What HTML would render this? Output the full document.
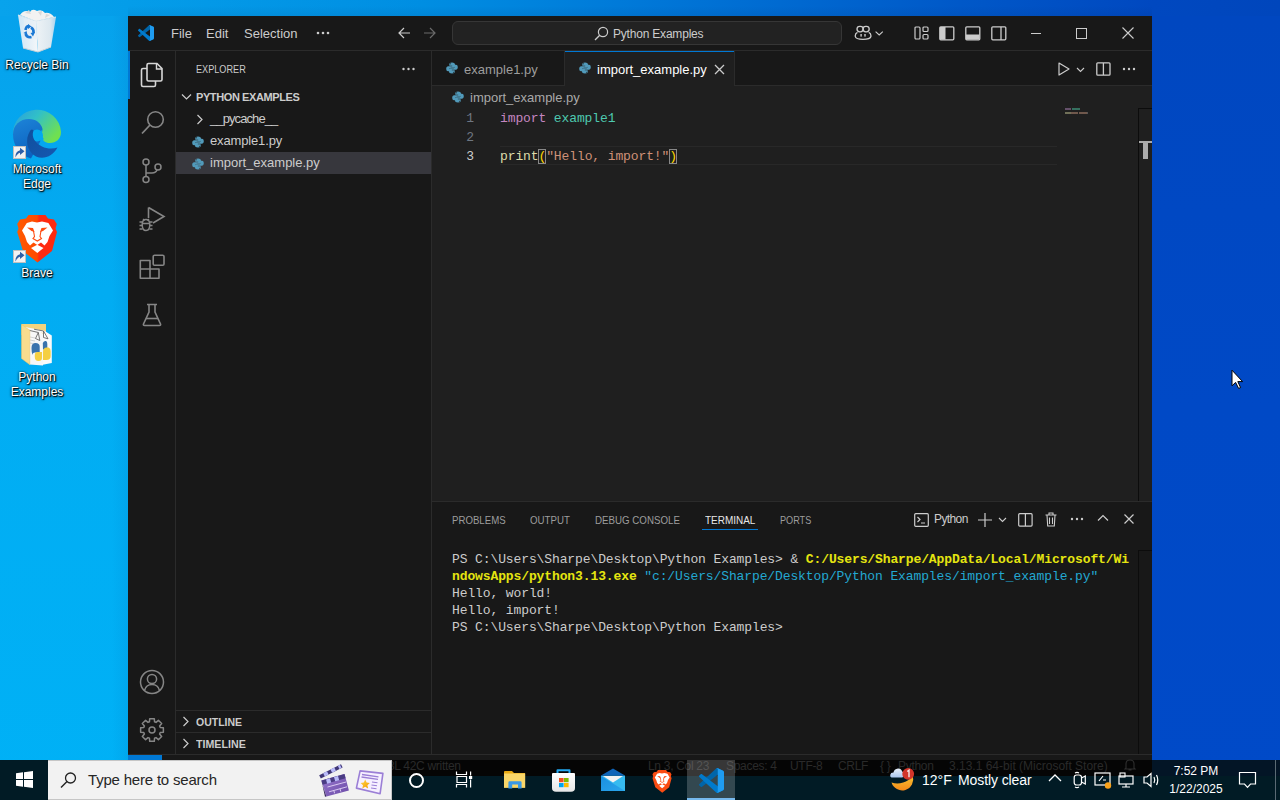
<!DOCTYPE html>
<html><head><meta charset="utf-8">
<style>
*{margin:0;padding:0;box-sizing:border-box}
html,body{width:1280px;height:800px;overflow:hidden;font-family:"Liberation Sans",sans-serif}
body{position:relative;background:#0050c6}
.a{position:absolute}
.t{position:absolute;white-space:nowrap}
svg{position:absolute;overflow:visible}
.mono{font-family:"Liberation Mono",monospace}
.desk{font-size:12px;color:#fff;line-height:15px;text-shadow:1px 1px 1px #000,0 0 2px rgba(0,0,0,0.9),0 1px 3px rgba(0,0,0,0.6)}
</style></head><body>
<svg width="0" height="0" style="position:absolute">
<defs>
<g id="py">
<path d="M6 0.5C3.5 0.5 3.3 1.5 3.3 2.5V3.8H6.2V4.3H2.2C1 4.3 0.2 5.2 0.2 6.8C0.2 8.5 1 9.3 2 9.3H3.2V7.6C3.2 6.6 4 5.8 5 5.8H7.6C8.4 5.8 9 5.2 9 4.4V2.5C9 1.5 8.2 0.5 6 0.5Z M4.6 1.3A0.5 0.5 0 1 1 4.6 2.3A0.5 0.5 0 1 1 4.6 1.3Z" fill="#519aba" fill-rule="evenodd"/>
<path d="M6 11.5C8.5 11.5 8.7 10.5 8.7 9.5V8.2H5.8V7.7H9.8C11 7.7 11.8 6.8 11.8 5.2C11.8 3.5 11 2.7 10 2.7H8.8V4.4C8.8 5.4 8 6.2 7 6.2H4.4C3.6 6.2 3 6.8 3 7.6V9.5C3 10.5 3.8 11.5 6 11.5Z M7.4 9.7A0.5 0.5 0 1 1 7.4 10.7A0.5 0.5 0 1 1 7.4 9.7Z" fill="#519aba" fill-rule="evenodd"/>
</g>
</defs></svg>
<!-- desktop gradient -->
<div class="a" style="left:0;top:0;width:1280px;height:800px;background:#0049c6"></div>
<div class="a" style="left:0;top:0;width:1280px;height:16px;background:linear-gradient(90deg,#08a3ec 0%,#049de9 10%,#008ee2 33%,#0078d8 50%,#0058c8 75%,#0048c0 90%,#0046bc 100%)"></div>
<div class="a" style="left:0;top:16px;width:128px;height:784px;background:linear-gradient(180deg,#06a2ec 0%,#02acf2 35%,#00b1f6 100%)"></div>
<div class="a" style="left:112px;top:16px;width:16px;height:784px;background:linear-gradient(90deg,rgba(0,60,140,0) 0%,rgba(0,60,140,0.08) 100%)"></div>
<div class="a" style="left:128px;top:6px;width:1024px;height:10px;background:linear-gradient(180deg,rgba(0,20,60,0) 0%,rgba(0,20,60,0.07) 100%)"></div>
<div class="a" style="left:1152px;top:16px;width:128px;height:784px;background:linear-gradient(180deg,#0047c0 0%,#0049c6 50%,#004ac8 100%)"></div>
<!-- desktop icons -->
<svg style="left:0;top:0" width="74" height="60" viewBox="0 0 74 60">
<defs><linearGradient id="rbL" x1="0" y1="0" x2="1" y2="0"><stop offset="0" stop-color="#cfe6f6"/><stop offset="1" stop-color="#f4f7f9"/></linearGradient>
<linearGradient id="rbR" x1="0" y1="0" x2="1" y2="0"><stop offset="0" stop-color="#eef3f6"/><stop offset="0.7" stop-color="#dde8ef"/><stop offset="1" stop-color="#a9d3ef"/></linearGradient></defs>
<path d="M18 15L36 21L38 52L23 48Z" fill="url(#rbL)"/>
<path d="M36 21L56 17L51 47L38 52Z" fill="url(#rbR)"/>
<path d="M18 15L36 21L56 17" fill="none" stroke="#d6e4ee" stroke-width="1.2"/>
<path d="M20 15Q24 9 30 12Q32 8 37 11Q42 9 45 13Q50 12 54 17L36 21Z" fill="#f2f2f2"/>
<path d="M25 13L29 10L31 14Z M38 12L42 11L41 16Z M46 14L50 15L45 18Z" fill="#d9d9d9"/>
<path d="M24 36L39 40L37 22L24 19Z" fill="#e6eff5" opacity="0.6"/>
<g fill="none" stroke="#1a78d4" stroke-width="2.6">
<path d="M25.5 30Q26 26 29 26"/><path d="M31 27.5Q34 29 33.5 33"/><path d="M31.5 37Q27 38 25.5 34"/>
</g>
<path d="M28 24L31.5 26.5L28 29Z M35 32L33 36.5L30.5 33Z M23.5 33L26.5 31L27.5 35Z" fill="#1a78d4"/>
<path d="M23 48L38 52L51 47" fill="none" stroke="#c8d2d8" stroke-width="1"/>
</svg>
<div class="t desk" style="left:0;top:58px;width:74px;text-align:center">Recycle Bin</div>
<svg style="left:0;top:100px" width="74" height="62" viewBox="0 100 74 62">
<defs><linearGradient id="eg1" x1="0" y1="0" x2="1" y2="0.6"><stop offset="0" stop-color="#2a9be0"/><stop offset="0.45" stop-color="#31c0c8"/><stop offset="1" stop-color="#70e050"/></linearGradient>
<linearGradient id="eg2" x1="0" y1="0" x2="0.3" y2="1"><stop offset="0" stop-color="#1d84d8"/><stop offset="1" stop-color="#0c62c0"/></linearGradient>
<linearGradient id="eg3" x1="0" y1="0" x2="1" y2="1"><stop offset="0" stop-color="#0f4f9e"/><stop offset="1" stop-color="#1658b0"/></linearGradient></defs>
<path d="M13 134.5A24 23.5 0 0 1 61 132C61 139 56 143 50 143C46 143 43 141 42 138Z" fill="url(#eg1)"/>
<path d="M13 134.5C13 125 20 119 29 119C36 119 41 123 42.5 129L41 140L31 158.5C20 155 13 146 13 134.5Z" fill="url(#eg2)"/>
<circle cx="37" cy="135.5" r="6" fill="#03a8ef"/>
<path d="M42.5 129C41 133 42 137 44 139L41 141L36 138Z" fill="#03a8ef"/>
<path d="M30 131C25 139 26 151 36 156.5C44 160 53 156 57.5 147.5C53 149 47 149 42 146.5C35 143 31 137 33.5 130.5C32 129 31 129.5 30 131Z" fill="url(#eg3)"/>
</svg>
<div class="a" style="left:13px;top:146px;width:13px;height:13px;background:#f2f2f2;border:1px solid #c0c0c0"></div>
<svg style="left:14px;top:147px" width="11" height="11" viewBox="0 0 11 11"><path d="M1.5 10.5Q1 4.5 6 3.2V0.8L10.5 4.3L6 8V5.8Q3.5 6.3 1.5 10.5Z" fill="#2d5fa8"/></svg>
<div class="t desk" style="left:0;top:162px;width:74px;text-align:center;line-height:15px">Microsoft<br>Edge</div>
<svg style="left:0;top:205px" width="74" height="62" viewBox="0 205 74 62">
<defs><linearGradient id="bg1" x1="0" y1="0" x2="1" y2="0"><stop offset="0" stop-color="#ff5a00"/><stop offset="0.5" stop-color="#ff4a00"/><stop offset="0.55" stop-color="#ff2a10"/><stop offset="1" stop-color="#ff2a10"/></linearGradient></defs>
<path d="M28.5 215H45.5L48 218.5L54 219.5L56.8 224L55.5 228.5L57 232L52 251L37.5 262.6L23 251L17.2 232L18.5 228.5L17.2 224L20 219.5L26 218.5Z" fill="url(#bg1)"/>
<path d="M22 230.5L26.8 223L32 221.5L37 222.5L42 221.5L48.4 223L53 230.5L49.5 236L47.5 242L44.5 245.5L41 242.5L37.3 245L33.5 242.5L30 245.5L27 242L25 236Z" fill="#ffffff"/>
<path d="M27 227.5L33 228L34.5 232L31.5 231Z M47.5 227.5L41.5 228L40 232L43 231Z" fill="#ff4a10"/>
<path d="M33.5 231L34.5 236.5L33 238.5L37.3 241L41.5 238.5L40 236.5L41 231" fill="none" stroke="#ff4a10" stroke-width="1.1"/>
<path d="M31 248L37.3 244.8L43.5 248L37.3 253Z" fill="#ffffff"/>
</svg>
<div class="a" style="left:13px;top:250px;width:13px;height:13px;background:#f2f2f2;border:1px solid #c0c0c0"></div>
<svg style="left:14px;top:251px" width="11" height="11" viewBox="0 0 11 11"><path d="M1.5 10.5Q1 4.5 6 3.2V0.8L10.5 4.3L6 8V5.8Q3.5 6.3 1.5 10.5Z" fill="#2d5fa8"/></svg>
<div class="t desk" style="left:0;top:266px;width:74px;text-align:center">Brave</div>
<svg style="left:0;top:315px" width="74" height="55" viewBox="0 315 74 55">
<path d="M21.5 324H46V335L21.5 335Z" fill="#f3d37e"/>
<path d="M25 327L38.5 329.5L43 334V365.5L29.5 364.5Z" fill="#f7f7f7"/>
<path d="M33.5 329L44 330.5L51.8 335.5V363L42.8 364.8V333Z" fill="#fafafa"/>
<path d="M29 330.3L38.3 332.5L39.8 340.5M38.3 332.5L35.5 338.5L39.8 340.5" fill="none" stroke="#555" stroke-width="0.8"/>
<path d="M34 329.2L43.5 331L48 338.8M43.5 331L43.5 337.5L48 338.8" fill="none" stroke="#555" stroke-width="0.8"/>
<path d="M31.5 348Q31.5 343 35.5 343Q39.7 343 39.7 346.5V352.5H35Q32.5 352.5 32.5 355Q31.5 353 31.5 348Z" fill="#3a73ad"/>
<path d="M34.8 355Q34.8 352 37.5 352H42V358Q42 361 38.5 361Q34.8 361 34.8 357Z" fill="#f5cf42"/>
<path d="M42.8 343Q44 340.5 46 341Q47.3 341.5 47.3 344V349.4H43Z" fill="#3a73ad"/>
<path d="M43 352Q43 348 46 347.5H48.5Q50.7 348 50.7 351V356Q50.7 360 46.5 360H43Z" fill="#f5cf42"/>
<path d="M30 337L35 338M30 340L35 341M30 343L33 343.6" stroke="#b8b8b8" stroke-width="0.6"/>
<path d="M21.5 324.5L29.8 330.3V364.7L21.5 358.5Z" fill="#f8dc8e"/>
<path d="M21.5 324.5L29.8 330.3V364.7L21.5 358.5Z" fill="none" stroke="#e9c268" stroke-width="0.5"/>
</svg>
<div class="t desk" style="left:0;top:370px;width:74px;text-align:center;line-height:15px">Python<br>Examples</div>
<!-- cursor -->
<svg style="left:1231px;top:369px" width="14" height="21" viewBox="0 0 14 21"><path d="M1 1.2V16.8L4.6 13.4L7.6 19.4L9.6 18.6L6.8 12.6H11.6Z" fill="#ffffff" stroke="#000" stroke-width="1"/></svg>
<!-- title bar -->
<div class="a" style="left:128px;top:16px;width:1024px;height:761px;background:#181818"></div>
<div class="a" style="left:128px;top:16px;width:1024px;height:34px;background:#181818"></div>
<div class="a" style="left:128px;top:50px;width:1024px;height:1px;background:#2b2b2b"></div>
<!-- vscode logo -->
<svg style="left:138px;top:25px" width="16" height="16" viewBox="0 0 100 100">
<path d="M96.46 10.8L75.86 0.88C73.47 -0.27 70.62 0.21 68.75 2.08L1.3 63.58C-0.52 65.24 -0.51 68.09 1.3 69.75L6.81 74.75C8.3 76.1 10.53 76.2 12.13 74.99L93.36 13.37C96.09 11.3 100 13.25 100 16.67V16.43C100 14.03 98.62 11.84 96.46 10.8Z" fill="#0065a9"/>
<path d="M96.46 89.2L75.86 99.12C73.47 100.27 70.62 99.79 68.75 97.92L1.3 36.42C-0.52 34.76 -0.51 31.91 1.3 30.25L6.81 25.25C8.3 23.9 10.53 23.8 12.13 25.01L93.36 86.63C96.09 88.7 100 86.75 100 83.33V83.57C100 85.97 98.62 88.16 96.46 89.2Z" fill="#007acc"/>
<path d="M75.86 99.13C73.47 100.27 70.62 99.79 68.75 97.92C71.06 100.22 75 98.59 75 95.33V4.67C75 1.41 71.06 -0.22 68.75 2.08C70.62 0.21 73.47 -0.27 75.86 0.87L96.46 10.78C98.62 11.82 100 14.01 100 16.41V83.59C100 85.99 98.62 88.18 96.46 89.22Z" fill="#1f9cf0"/>
</svg>
<div class="t" style="left:171px;top:26px;font-size:13px;color:#cccccc;line-height:16px">File</div>
<div class="t" style="left:206px;top:26px;font-size:13px;color:#cccccc;line-height:16px">Edit</div>
<div class="t" style="left:244px;top:26px;font-size:13px;color:#cccccc;line-height:16px">Selection</div>
<svg style="left:316px;top:31px" width="14" height="4"><circle cx="2" cy="2" r="1.3" fill="#cccccc"/><circle cx="7" cy="2" r="1.3" fill="#cccccc"/><circle cx="12" cy="2" r="1.3" fill="#cccccc"/></svg>
<!-- nav arrows -->
<svg style="left:397px;top:26px" width="14" height="14" viewBox="0 0 14 14"><path d="M13 7H2M7 2L2 7L7 12" stroke="#cccccc" stroke-width="1.2" fill="none"/></svg>
<svg style="left:423px;top:26px" width="14" height="14" viewBox="0 0 14 14"><path d="M1 7H12M7 2L12 7L7 12" stroke="#6b6b6b" stroke-width="1.2" fill="none"/></svg>
<!-- command center -->
<div class="a" style="left:452px;top:21px;width:390px;height:24px;border:1px solid #363636;border-radius:6px;background:#222222"></div>
<svg style="left:594px;top:26px" width="15" height="15" viewBox="0 0 15 15"><circle cx="9" cy="6" r="4.6" stroke="#cccccc" stroke-width="1.2" fill="none"/><path d="M5.7 9.3L1 14" stroke="#cccccc" stroke-width="1.3"/></svg>
<div class="t" style="left:613px;top:27px;font-size:12px;letter-spacing:-0.2px;color:#cccccc;line-height:15px">Python Examples</div>
<!-- copilot -->
<svg style="left:840px;top:16px" width="40" height="34" viewBox="840 16 40 34">
<rect x="857" y="26.3" width="6.2" height="5.6" rx="2.8" fill="none" stroke="#cccccc" stroke-width="1.3"/>
<rect x="863" y="26.3" width="6.2" height="5.6" rx="2.8" fill="none" stroke="#cccccc" stroke-width="1.3"/>
<path d="M857.5 32.3Q855.3 33 855.3 35.5V36.5Q855.8 39.3 863 39.3Q870.3 39.3 870.9 36.5V35.5Q870.9 33 868.7 32.3" fill="none" stroke="#cccccc" stroke-width="1.3"/>
<rect x="860.4" y="34" width="1.4" height="2.6" fill="#cccccc"/>
<rect x="864.3" y="34" width="1.4" height="2.6" fill="#cccccc"/>
</svg>
<svg style="left:875px;top:31px" width="9" height="5" viewBox="0 0 9 5"><path d="M0.6 0.6L4.2 4L7.8 0.6" stroke="#cccccc" stroke-width="1.1" fill="none"/></svg>
<!-- layout icons -->
<svg style="left:914px;top:26px" width="16" height="14" viewBox="0 0 16 14"><rect x="1" y="1" width="5" height="12" rx="1" stroke="#cccccc" stroke-width="1.2" fill="none"/><rect x="9" y="1" width="5" height="4.5" rx="1" stroke="#cccccc" stroke-width="1.2" fill="none"/><rect x="9" y="8.5" width="5" height="4.5" rx="1" stroke="#cccccc" stroke-width="1.2" fill="none"/></svg>
<svg style="left:939px;top:26px" width="16" height="15" viewBox="0 0 16 15"><rect x="0.8" y="0.8" width="14" height="13" rx="1" stroke="#cccccc" stroke-width="1.3" fill="none"/><rect x="1" y="1" width="5.5" height="12.6" fill="#cccccc"/></svg>
<svg style="left:965px;top:26px" width="16" height="15" viewBox="0 0 16 15"><rect x="0.8" y="0.8" width="14" height="13" rx="1" stroke="#cccccc" stroke-width="1.3" fill="none"/><rect x="1" y="8.5" width="13.6" height="5" fill="#cccccc"/></svg>
<svg style="left:991px;top:26px" width="16" height="15" viewBox="0 0 16 15"><rect x="0.8" y="0.8" width="14" height="13" rx="1" stroke="#cccccc" stroke-width="1.3" fill="none"/><path d="M10 1V14" stroke="#cccccc" stroke-width="1.3"/></svg>
<!-- window controls -->
<div class="a" style="left:1031px;top:33px;width:10px;height:1px;background:#cccccc"></div>
<div class="a" style="left:1076px;top:28px;width:11px;height:11px;border:1px solid #cccccc"></div>
<svg style="left:1122px;top:27px" width="12" height="12" viewBox="0 0 12 12"><path d="M0.5 0.5L11.5 11.5M11.5 0.5L0.5 11.5" stroke="#cccccc" stroke-width="1.1"/></svg>
<!-- activity bar -->
<div class="a" style="left:128px;top:51px;width:2px;height:48px;background:#0078d4"></div>
<div class="a" style="left:175px;top:51px;width:1px;height:704px;background:#2b2b2b"></div>
<!-- explorer icon -->
<svg style="left:140px;top:62px" width="24" height="26" viewBox="0 0 24 26">
<path d="M8.5 1.5H17L22 6.5V17.5Q22 19 20.5 19H8.5Q7 19 7 17.5V3Q7 1.5 8.5 1.5Z" fill="none" stroke="#d7d7d7" stroke-width="1.6"/>
<path d="M16.5 1.5V7H22" fill="none" stroke="#d7d7d7" stroke-width="1.4"/>
<path d="M7 6.5H3Q1.5 6.5 1.5 8V23Q1.5 24.5 3 24.5H14Q15.5 24.5 15.5 23V19" fill="none" stroke="#d7d7d7" stroke-width="1.6"/>
</svg>
<!-- search -->
<svg style="left:141px;top:110px" width="24" height="26" viewBox="0 0 24 26">
<circle cx="14.5" cy="9.5" r="7.8" fill="none" stroke="#868686" stroke-width="1.6"/>
<path d="M9 15L1 23.5" stroke="#868686" stroke-width="1.8"/>
</svg>
<!-- source control -->
<svg style="left:141px;top:158px" width="22" height="26" viewBox="0 0 22 26">
<circle cx="5" cy="4" r="3" fill="none" stroke="#868686" stroke-width="1.5"/>
<circle cx="5" cy="21.5" r="3" fill="none" stroke="#868686" stroke-width="1.5"/>
<circle cx="17" cy="9" r="3" fill="none" stroke="#868686" stroke-width="1.5"/>
<path d="M5 7V18.5M5 15H11Q15 15 16 11.8" fill="none" stroke="#868686" stroke-width="1.5"/>
</svg>
<!-- run & debug -->
<svg style="left:139px;top:206px" width="26" height="26" viewBox="0 0 26 26">
<path d="M9.5 1.5V12M9.5 1.5L25 10.5L14 17" fill="none" stroke="#868686" stroke-width="1.6"/>
<path d="M3.2 18.5Q3.2 13.5 7 13.5Q10.8 13.5 10.8 18.5Q10.8 24.5 7 24.5Q3.2 24.5 3.2 18.5Z" fill="none" stroke="#868686" stroke-width="1.5"/>
<path d="M0.5 16H3.2M0.5 19.5H3.2M0.5 23H3.5M10.8 16H13.5M10.8 19.5H13.5M10.5 23H13.5M4 13L5.5 14.5M10 13L8.5 14.5M3.5 17.5H10.5" stroke="#868686" stroke-width="1.3"/>
</svg>
<!-- extensions -->
<svg style="left:139px;top:254px" width="26" height="26" viewBox="0 0 26 26">
<path d="M1.3 6.5H11V15H20V24.2H1.3Z M1.3 15H11V24.2" fill="none" stroke="#868686" stroke-width="1.6" stroke-linejoin="round"/>
<rect x="14.2" y="1.3" width="10.8" height="10" rx="1.3" fill="none" stroke="#868686" stroke-width="1.6"/>
</svg>
<!-- testing -->
<svg style="left:142px;top:303px" width="20" height="24" viewBox="0 0 20 24">
<path d="M5 1.5H15M7 1.5V9L1.5 21Q1 22.5 2.5 22.5H17.5Q19 22.5 18.5 21L13 9V1.5" fill="none" stroke="#868686" stroke-width="1.6"/>
<path d="M4 15.5H16" stroke="#868686" stroke-width="1.6"/>
</svg>
<!-- accounts -->
<svg style="left:139px;top:669px" width="26" height="26" viewBox="0 0 26 26">
<circle cx="13" cy="13" r="11.5" fill="none" stroke="#868686" stroke-width="1.5"/>
<circle cx="13" cy="10" r="4.6" fill="none" stroke="#868686" stroke-width="1.5"/>
<path d="M5.5 21.5Q7 15.5 13 15.5Q19 15.5 20.5 21.5" fill="none" stroke="#868686" stroke-width="1.5"/>
</svg>
<!-- settings -->
<svg style="left:139px;top:717px" width="26" height="26" viewBox="0 0 26 26">
<path id="gear" d="M10.46 4.78 L10.70 1.63 L15.30 1.63 L15.54 4.78 L17.01 5.39 L19.41 3.33 L22.67 6.59 L20.61 8.99 L21.22 10.46 L24.37 10.70 L24.37 15.30 L21.22 15.54 L20.61 17.01 L22.67 19.41 L19.41 22.67 L17.01 20.61 L15.54 21.22 L15.30 24.37 L10.70 24.37 L10.46 21.22 L8.99 20.61 L6.59 22.67 L3.33 19.41 L5.39 17.01 L4.78 15.54 L1.63 15.30 L1.63 10.70 L4.78 10.46 L5.39 8.99 L3.33 6.59 L6.59 3.33 L8.99 5.39Z" fill="none" stroke="#868686" stroke-width="1.5" stroke-linejoin="round"/>
<circle cx="13" cy="13" r="3" fill="none" stroke="#868686" stroke-width="1.5"/>
</svg>

<!-- sidebar -->
<div class="a" style="left:431px;top:51px;width:1px;height:704px;background:#2b2b2b"></div>
<div class="t" style="left:196px;top:62px;font-size:11px;transform:scaleX(0.83);transform-origin:0 0;color:#cccccc;line-height:14px">EXPLORER</div>
<svg style="left:402px;top:67px" width="13" height="4"><circle cx="1.5" cy="2" r="1.2" fill="#cccccc"/><circle cx="6.5" cy="2" r="1.2" fill="#cccccc"/><circle cx="11.5" cy="2" r="1.2" fill="#cccccc"/></svg>
<svg style="left:181px;top:93px" width="11" height="8" viewBox="0 0 11 8"><path d="M1 1.5L5.5 6L10 1.5" stroke="#cccccc" stroke-width="1.2" fill="none"/></svg>
<div class="t" style="left:196px;top:90px;font-size:11px;font-weight:bold;letter-spacing:-0.4px;color:#cccccc;line-height:14px">PYTHON EXAMPLES</div>
<svg style="left:196px;top:114px" width="8" height="11" viewBox="0 0 8 11"><path d="M1.5 1L6 5.5L1.5 10" stroke="#cccccc" stroke-width="1.2" fill="none"/></svg>
<div class="t" style="left:210px;top:111px;font-size:13px;color:#cccccc;letter-spacing:-0.9px;line-height:16px">__pycache__</div>
<div class="a" style="left:176px;top:152px;width:255px;height:22px;background:#37373d"></div>
<svg style="left:192px;top:136px" width="12" height="12" viewBox="0 0 12 12"><use href="#py"/></svg>
<svg style="left:192px;top:158px" width="12" height="12" viewBox="0 0 12 12"><use href="#py"/></svg>
<div class="t" style="left:210px;top:133px;font-size:13px;color:#cccccc;letter-spacing:-0.15px;line-height:16px">example1.py</div>
<div class="t" style="left:210px;top:155px;font-size:13px;color:#cccccc;line-height:16px">import_example.py</div>
<!-- outline/timeline -->
<div class="a" style="left:176px;top:710px;width:255px;height:1px;background:#2b2b2b"></div>
<div class="a" style="left:176px;top:732px;width:255px;height:1px;background:#2b2b2b"></div>
<svg style="left:182px;top:716px" width="8" height="11" viewBox="0 0 8 11"><path d="M1.5 1L6 5.5L1.5 10" stroke="#cccccc" stroke-width="1.2" fill="none"/></svg>
<div class="t" style="left:196px;top:715px;font-size:11px;font-weight:bold;transform:scaleX(0.955);transform-origin:0 0;color:#cccccc;line-height:14px">OUTLINE</div>
<svg style="left:182px;top:738px" width="8" height="11" viewBox="0 0 8 11"><path d="M1.5 1L6 5.5L1.5 10" stroke="#cccccc" stroke-width="1.2" fill="none"/></svg>
<div class="t" style="left:196px;top:737px;font-size:11px;font-weight:bold;transform:scaleX(0.97);transform-origin:0 0;color:#cccccc;line-height:14px">TIMELINE</div>
<!-- editor -->
<div class="a" style="left:432px;top:51px;width:720px;height:450px;background:#1f1f1f"></div>
<div class="a" style="left:432px;top:51px;width:720px;height:35px;background:#181818"></div>
<div class="a" style="left:432px;top:85px;width:720px;height:1px;background:#2b2b2b"></div>
<div class="a" style="left:564px;top:51px;width:1px;height:35px;background:#2b2b2b"></div>
<div class="a" style="left:565px;top:51px;width:169px;height:35px;background:#1f1f1f"></div>
<div class="a" style="left:565px;top:51px;width:169px;height:1px;background:#0078d4"></div>
<div class="a" style="left:734px;top:51px;width:1px;height:35px;background:#2b2b2b"></div>
<svg style="left:446px;top:62px" width="12" height="12" viewBox="0 0 12 12"><use href="#py"/></svg>
<div class="t" style="left:464px;top:62px;font-size:13px;color:#9d9d9d;line-height:16px">example1.py</div>
<svg style="left:579px;top:62px" width="12" height="12" viewBox="0 0 12 12"><use href="#py"/></svg>
<div class="t" style="left:597px;top:62px;font-size:13px;color:#ffffff;line-height:16px">import_example.py</div>
<svg style="left:714px;top:64px" width="11" height="11" viewBox="0 0 11 11"><path d="M1 1L10 10M10 1L1 10" stroke="#cccccc" stroke-width="1.3"/></svg>
<!-- editor actions -->
<svg style="left:1058px;top:62px" width="12" height="14" viewBox="0 0 12 14"><path d="M1 1L11 7L1 13Z" fill="none" stroke="#cccccc" stroke-width="1.2" stroke-linejoin="round"/></svg>
<svg style="left:1076px;top:67px" width="9" height="6" viewBox="0 0 9 6"><path d="M1 1L4.5 4.5L8 1" stroke="#cccccc" stroke-width="1.1" fill="none"/></svg>
<svg style="left:1096px;top:62px" width="15" height="14" viewBox="0 0 15 14"><rect x="0.8" y="0.8" width="13.2" height="12.4" rx="1" stroke="#cccccc" stroke-width="1.3" fill="none"/><path d="M7.4 1V13" stroke="#cccccc" stroke-width="1.3"/></svg>
<svg style="left:1122px;top:67px" width="14" height="4"><circle cx="2" cy="2" r="1.2" fill="#cccccc"/><circle cx="7" cy="2" r="1.2" fill="#cccccc"/><circle cx="12" cy="2" r="1.2" fill="#cccccc"/></svg>
<!-- breadcrumb -->
<svg style="left:452px;top:91px" width="12" height="12" viewBox="0 0 12 12"><use href="#py"/></svg>
<div class="t" style="left:470px;top:90px;font-size:13px;color:#a9a9a9;line-height:16px">import_example.py</div>
<!-- current line -->
<div class="a" style="left:500px;top:146px;width:557px;height:19px;border:1px solid #282828;border-width:1px 0"></div>
<!-- line numbers -->
<div class="t mono" style="left:460px;top:109px;width:14px;text-align:right;font-size:13px;letter-spacing:-0.11px;line-height:19px;color:#6e7681">1</div>
<div class="t mono" style="left:460px;top:128px;width:14px;text-align:right;font-size:13px;letter-spacing:-0.11px;line-height:19px;color:#6e7681">2</div>
<div class="t mono" style="left:460px;top:147px;width:14px;text-align:right;font-size:13px;letter-spacing:-0.11px;line-height:19px;color:#cccccc">3</div>
<div class="t mono code" style="left:500px;top:109px;font-size:13px;letter-spacing:-0.11px;line-height:19px"><span style="color:#c586c0">import</span> <span style="color:#4ec9b0">example1</span></div>
<div class="t mono code" style="left:500px;top:147px;font-size:13px;letter-spacing:-0.11px;line-height:19px"><span style="color:#dcdcaa">print</span><span style="color:#ffd700;outline:1px solid #888;outline-offset:-1px">(</span><span style="color:#ce9178">"Hello, import!"</span><span style="color:#ffd700;outline:1px solid #888;outline-offset:-1px">)</span></div>
<!-- minimap -->
<div class="a" style="left:1065px;top:108px;width:6px;height:2px;background:#65506a"></div>
<div class="a" style="left:1072px;top:108px;width:8px;height:2px;background:#35705f"></div>
<div class="a" style="left:1065px;top:112px;width:6px;height:2px;background:#707058"></div>
<div class="a" style="left:1071px;top:112px;width:7px;height:2px;background:#70584c"></div>
<div class="a" style="left:1079px;top:112px;width:8px;height:2px;background:#70584c"></div>
<div class="a" style="left:1087px;top:112px;width:1px;height:2px;background:#555"></div>
<div class="a" style="left:1138px;top:108px;width:14px;height:393px;border-left:1px solid #0c0c0c;border-top:1px solid #0c0c0c"></div>
<div class="a" style="left:1139px;top:141px;width:13px;height:2px;background:#aaaaaa"></div>
<div class="a" style="left:1143px;top:141px;width:5px;height:18px;background:#aaaaaa"></div>

<!-- panel -->
<div class="a" style="left:432px;top:501px;width:720px;height:1px;background:#2b2b2b"></div>
<div class="a" style="left:432px;top:502px;width:720px;height:253px;background:#181818"></div>
<div class="t" style="left:452px;top:513px;font-size:11px;color:#9d9d9d;line-height:14px;transform:scaleX(0.877);transform-origin:0 0">PROBLEMS</div>
<div class="t" style="left:530px;top:513px;font-size:11px;color:#9d9d9d;line-height:14px;transform:scaleX(0.88);transform-origin:0 0">OUTPUT</div>
<div class="t" style="left:595px;top:513px;font-size:11px;color:#9d9d9d;line-height:14px;transform:scaleX(0.885);transform-origin:0 0">DEBUG CONSOLE</div>
<div class="t" style="left:705px;top:513px;font-size:11px;color:#e7e7e7;line-height:14px;transform:scaleX(0.905);transform-origin:0 0">TERMINAL</div>
<div class="a" style="left:702px;top:529px;width:56px;height:1px;background:#0078d4"></div>
<div class="t" style="left:780px;top:513px;font-size:11px;color:#9d9d9d;line-height:14px;transform:scaleX(0.83);transform-origin:0 0">PORTS</div>
<!-- panel actions -->
<svg style="left:914px;top:513px" width="15" height="14" viewBox="0 0 15 14"><rect x="0.7" y="0.7" width="13.6" height="12.6" rx="1" stroke="#cccccc" stroke-width="1.2" fill="none"/><path d="M3.5 4L6 6.5L3.5 9M7 10H11" stroke="#cccccc" stroke-width="1.2" fill="none"/></svg>
<div class="t" style="left:934px;top:512px;font-size:12px;color:#cccccc;line-height:15px;letter-spacing:-0.6px">Python</div>
<svg style="left:978px;top:513px" width="14" height="14" viewBox="0 0 14 14"><path d="M7 0V14M0 7H14" stroke="#cccccc" stroke-width="1.2"/></svg>
<svg style="left:998px;top:517px" width="9" height="6" viewBox="0 0 9 6"><path d="M1 1L4.5 4.5L8 1" stroke="#cccccc" stroke-width="1.1" fill="none"/></svg>
<svg style="left:1018px;top:513px" width="15" height="14" viewBox="0 0 15 14"><rect x="0.7" y="0.7" width="13.4" height="12.4" rx="1" stroke="#cccccc" stroke-width="1.2" fill="none"/><path d="M7.4 1V13" stroke="#cccccc" stroke-width="1.2"/></svg>
<svg style="left:1045px;top:512px" width="12" height="15" viewBox="0 0 12 15"><path d="M0.5 3H11.5M4 3V1H8V3M2 3L2.7 14H9.3L10 3M4.5 5.5V12M7.5 5.5V12" stroke="#cccccc" stroke-width="1.1" fill="none"/></svg>
<svg style="left:1070px;top:517px" width="14" height="4"><circle cx="2" cy="2" r="1.2" fill="#cccccc"/><circle cx="7" cy="2" r="1.2" fill="#cccccc"/><circle cx="12" cy="2" r="1.2" fill="#cccccc"/></svg>
<svg style="left:1097px;top:514px" width="12" height="8" viewBox="0 0 12 8"><path d="M1 6.5L6 1.5L11 6.5" stroke="#cccccc" stroke-width="1.2" fill="none"/></svg>
<svg style="left:1124px;top:514px" width="10" height="10" viewBox="0 0 10 10"><path d="M0.5 0.5L9.5 9.5M9.5 0.5L0.5 9.5" stroke="#cccccc" stroke-width="1.2"/></svg>
<!-- terminal -->
<div class="a" style="left:1138px;top:550px;width:14px;height:205px;border-left:1px solid #0c0c0c;border-top:1px solid #0c0c0c"></div>
<div class="t mono term" style="left:452px;top:551px;font-size:13px;letter-spacing:-0.11px;line-height:17px;color:#cccccc">PS C:\Users\Sharpe\Desktop\Python Examples&gt; &amp; <b style="color:#e5e510">C:/Users/Sharpe/AppData/Local/Microsoft/Wi</b><br><b style="color:#e5e510">ndowsApps/python3.13.exe</b> <span style="color:#23a8d2">"c:/Users/Sharpe/Desktop/Python Examples/import_example.py"</span><br>Hello, world!<br>Hello, import!<br>PS C:\Users\Sharpe\Desktop\Python Examples&gt;</div>

<!-- status bar -->
<div class="a" style="left:128px;top:754px;width:1024px;height:1px;background:#2b2b2b"></div>
<div class="a" style="left:128px;top:755px;width:1024px;height:22px;background:#181818"></div>
<div class="a" style="left:128px;top:755px;width:34px;height:22px;background:#0078d4"></div>
<!-- status bar text (dimmed by taskbar) -->
<div class="a" style="left:0;top:760px;width:1280px;height:40px;background:rgba(0,0,0,0)"></div>
<!-- taskbar -->
<div class="a" style="left:0;top:776px;width:1280px;height:24px;background:#011b25"></div>
<div class="a" style="left:0;top:760px;width:128px;height:16px;background:#011b25"></div>
<div class="a" style="left:1152px;top:760px;width:128px;height:16px;background:#031526"></div>
<div class="a" style="left:128px;top:760px;width:1024px;height:16px;background:#050505"></div>
<div class="t" style="left:388px;top:759px;font-size:12px;letter-spacing:-0.3px;color:#2a2a2a;line-height:15px">3L 42C written</div>
<div class="t" style="left:648px;top:759px;font-size:12px;letter-spacing:-0.3px;color:#2a2a2a;line-height:15px">Ln 3, Col 23</div>
<div class="t" style="left:726px;top:759px;font-size:12px;letter-spacing:-0.3px;color:#2a2a2a;line-height:15px">Spaces: 4</div>
<div class="t" style="left:790px;top:759px;font-size:12px;letter-spacing:-0.3px;color:#2a2a2a;line-height:15px">UTF-8</div>
<div class="t" style="left:838px;top:759px;font-size:12px;letter-spacing:-0.3px;color:#2a2a2a;line-height:15px">CRLF</div>
<div class="t" style="left:880px;top:759px;font-size:12px;letter-spacing:-0.3px;color:#2a2a2a;line-height:15px">{ }</div>
<div class="t" style="left:898px;top:759px;font-size:12px;letter-spacing:-0.3px;color:#2a2a2a;line-height:15px">Python</div>
<svg style="left:1124px;top:758px" width="12" height="13" viewBox="0 0 12 13"><path d="M2 10V6Q2 2 6 2Q10 2 10 6V10L11 11H1Z M4.5 12H7.5" stroke="#2e2e2e" stroke-width="1.1" fill="none"/></svg>
<div class="t" style="left:949px;top:759px;font-size:12px;letter-spacing:0px;color:#2a2a2a;line-height:15px">3.13.1 64-bit (Microsoft Store)</div>
<!-- start -->
<svg style="left:16px;top:771px" width="17" height="17" viewBox="0 0 17 17"><path d="M0 2.3L7 1.3V8H0Z M8 1.2L17 0V8H8Z M0 9H7V15.7L0 14.7Z M8 9H17V17L8 15.8Z" fill="#ffffff"/></svg>
<!-- search box -->
<div class="a" style="left:48px;top:760px;width:344px;height:40px;background:#f2f2f2;border:1px solid #c6c6c6;border-left:0"></div>
<svg style="left:60px;top:772px" width="17" height="16" viewBox="0 0 17 16"><circle cx="10.5" cy="6" r="5" fill="none" stroke="#222" stroke-width="1.3"/><path d="M7 9.5L1 15.5" stroke="#222" stroke-width="1.4"/></svg>
<div class="t" style="left:88px;top:771px;font-size:15px;letter-spacing:-0.2px;color:#262626;line-height:18px">Type here to search</div>
<!-- search highlights -->
<svg style="left:310px;top:760px" width="84" height="40" viewBox="310 760 84 40">
<defs><linearGradient id="clg" x1="0" y1="0" x2="1" y2="1"><stop offset="0" stop-color="#9a7ad0"/><stop offset="1" stop-color="#6a4aa6"/></linearGradient>
<linearGradient id="stgr" x1="0" y1="0" x2="1" y2="1"><stop offset="0" stop-color="#ffd84a"/><stop offset="1" stop-color="#f39a00"/></linearGradient></defs>
<path d="M319.2 775.2L341 764.2L342.6 767.4L320.8 778.4Z" fill="#3f3676"/>
<path d="M323.2 773.2L327 771.3L328.6 774.5L324.8 776.4Z M330.5 769.5L334.3 767.6L335.9 770.8L332.1 772.7Z M337.8 765.8L340 764.7L341.6 767.9L339.4 769Z" fill="#b9bafa"/>
<path d="M321.4 780.6L344.5 774L348.9 790.6L326.4 796.6Z" fill="url(#clg)"/>
<path d="M321.4 780.6L344.5 774L345.6 778.2L322.5 784.8Z" fill="#4a3c84"/>
<path d="M326 779.4L330 778.2L331.2 782.6L327.2 783.7Z M334 777L338 775.9L339.2 780.2L335.2 781.3Z" fill="#b9bafa"/>
<path d="M321.4 780.6L322.5 784.8L326.4 796.6L325 796.8Z" fill="#3a2a60"/>
<path d="M327.5 787L346 782M329 791.8L347 786.8M333.8 790.5L334.6 793.3M340 788.8L340.8 791.6" stroke="#e2d4f6" stroke-width="0.9"/>
<path d="M360.1 770.9L382.9 773.4L380.1 793.75L356.4 788.1Z" fill="#f6f0ff" stroke="#9b7fd6" stroke-width="1.6" stroke-linejoin="round"/>
<path d="M362 774.5L378.5 776.8M361.5 777L378 779.3" stroke="#9b7fd6" stroke-width="1.3"/>
<path d="M372 782L377.5 782.8M371.5 785L377 785.8M371 788L376.5 788.8" stroke="#9b7fd6" stroke-width="1.1"/>
<path d="M365.2 779.6L366.6 782.6L369.8 783L367.4 785.2L368.1 788.4L365.2 786.8L362.3 788.4L363 785.2L360.6 783L363.8 782.6Z" fill="url(#stgr)"/>
</svg>
<!-- cortana -->
<div class="a" style="left:409px;top:773px;width:15px;height:15px;border:2px solid #ffffff;border-radius:50%"></div>
<!-- task view -->
<svg style="left:0;top:760px" width="560" height="40" viewBox="0 760 560 40">
<path d="M456.5 771.5V774.5H466.5V771.5M457 776.5H466.5V782.5H457Z M456.5 787.5V784.5H466.5V787.5" fill="none" stroke="#fff" stroke-width="1.2"/>
<path d="M470.6 771.5V775.5M470.6 779.5V787.5" stroke="#fff" stroke-width="1.2"/>
<rect x="469" y="776" width="3.2" height="3" fill="#fff"/>
<!-- file explorer -->
<path d="M504 772Q504 771 505 771H512L514 773H525V787.5H504Z" fill="#e9a913"/>
<path d="M504 773.5H525.2V787.8H504Z" fill="#f9d669"/>
<path d="M508.4 782.5Q508.4 781.2 509.6 781.2H520.4Q521.6 781.2 521.6 782.5V788.6H518V784.5H512.2V788.6H508.4Z" fill="#3a98e6"/>
</svg>
<!-- store -->
<svg style="left:540px;top:760px" width="100" height="40" viewBox="540 760 100 40">
<defs><linearGradient id="stg" x1="0" y1="0" x2="0" y2="1"><stop offset="0" stop-color="#ffffff"/><stop offset="1" stop-color="#e6e6e6"/></linearGradient>
<linearGradient id="mlg" x1="0" y1="0" x2="1" y2="1"><stop offset="0" stop-color="#1a8ee0"/><stop offset="1" stop-color="#2aa6ec"/></linearGradient></defs>
<path d="M557.5 775V770.2H569.5V775" stroke="#22a8f0" stroke-width="2" fill="none" stroke-linejoin="round"/>
<path d="M552 774Q552 773 553 773H574Q575 773 575 774V788Q575 791.8 571 791.8H556Q552 791.8 552 788Z" fill="url(#stg)"/>
<rect x="559" y="778" width="4.6" height="4.2" fill="#f05022"/><rect x="564" y="778" width="4.6" height="4.2" fill="#7fba00"/>
<rect x="559" y="783" width="4.6" height="4.2" fill="#00a4ef"/><rect x="564" y="783" width="4.6" height="4.2" fill="#ffb900"/>
<!-- mail -->
<path d="M601 775.5L613 768.5L625 775.5Z" fill="#0f64b8"/>
<path d="M601 775.5H625V791H601Z" fill="url(#mlg)"/>
<path d="M601 776H625V791Z" fill="#36bbf0"/>
<path d="M603 776H623L613 782.5Z" fill="#f2f2f2"/>
</svg>
<!-- brave -->
<svg style="left:651px;top:770px" width="22" height="23" viewBox="17 215 40 48">
<path d="M28.5 215H45.5L48 218.5L54 219.5L56.8 224L55.5 228.5L57 232L52 251L37.5 262.6L23 251L17.2 232L18.5 228.5L17.2 224L20 219.5L26 218.5Z" fill="#fb4c12"/>
<path d="M22 230.5L26.8 223L32 221.5L37 222.5L42 221.5L48.4 223L53 230.5L49.5 236L47.5 242L44.5 245.5L41 242.5L37.3 245L33.5 242.5L30 245.5L27 242L25 236Z" fill="#ffffff"/>
<path d="M27 227.5L33 228L34.5 232L31.5 231Z M47.5 227.5L41.5 228L40 232L43 231Z" fill="#ff4a10"/>
<path d="M33.5 231L34.5 236.5L33 238.5L37.3 241L41.5 238.5L40 236.5L41 231" fill="none" stroke="#ff4a10" stroke-width="1.6"/>
<path d="M31 248L37.3 244.8L43.5 248L37.3 253Z" fill="#ffffff"/>
</svg>
<!-- vscode active -->
<div class="a" style="left:687px;top:760px;width:48px;height:40px;background:rgba(255,255,255,0.2)"></div>
<div class="a" style="left:687px;top:798px;width:48px;height:2px;background:#76b9ed"></div>
<svg style="left:699px;top:768px" width="25" height="25" viewBox="0 0 100 100">
<path d="M96.46 10.8L75.86 0.88C73.47 -0.27 70.62 0.21 68.75 2.08L1.3 63.58C-0.52 65.24 -0.51 68.09 1.3 69.75L6.81 74.75C8.3 76.1 10.53 76.2 12.13 74.99L93.36 13.37C96.09 11.3 100 13.25 100 16.67V16.43C100 14.03 98.62 11.84 96.46 10.8Z" fill="#0065a9"/>
<path d="M96.46 89.2L75.86 99.12C73.47 100.27 70.62 99.79 68.75 97.92L1.3 36.42C-0.52 34.76 -0.51 31.91 1.3 30.25L6.81 25.25C8.3 23.9 10.53 23.8 12.13 25.01L93.36 86.63C96.09 88.7 100 86.75 100 83.33V83.57C100 85.97 98.62 88.16 96.46 89.2Z" fill="#007acc"/>
<path d="M75.86 99.13C73.47 100.27 70.62 99.79 68.75 97.92C71.06 100.22 75 98.59 75 95.33V4.67C75 1.41 71.06 -0.22 68.75 2.08C70.62 0.21 73.47 -0.27 75.86 0.87L96.46 10.78C98.62 11.82 100 14.01 100 16.41V83.59C100 85.99 98.62 88.18 96.46 89.22Z" fill="#1f9cf0"/>
</svg>
<!-- tray -->
<svg style="left:880px;top:760px" width="40" height="40" viewBox="880 760 40 40">
<defs><linearGradient id="moon" x1="0" y1="0" x2="0" y2="1"><stop offset="0" stop-color="#f6c230"/><stop offset="1" stop-color="#f48a1a"/></linearGradient>
<linearGradient id="cloud" x1="0" y1="0" x2="0" y2="1"><stop offset="0" stop-color="#e8f0fa"/><stop offset="1" stop-color="#a9c6ee"/></linearGradient></defs>
<path d="M891.5 782.5A11 11 0 0 0 912.8 776A20 20 0 0 1 891.5 782.5Z" fill="url(#moon)"/>
<path d="M891.5 777.5Q890 777 890.2 775Q890.6 772.6 893.5 772.6Q894 769 898 768.6Q901.2 768.5 902.2 771.5Q904 771.8 904 774.5Q904 777.6 901 777.6Z" fill="url(#cloud)"/>
<circle cx="908.2" cy="773.8" r="5.9" fill="#d2352a"/>
<path d="M907.2 771.5L909 770.2V777.3" stroke="#f4e4e4" stroke-width="1.4" fill="none"/>
</svg>
<div class="t" style="left:922px;top:772px;font-size:14px;color:#ffffff;line-height:17px">12°F</div>
<div class="t" style="left:958px;top:772px;font-size:14px;letter-spacing:-0.1px;color:#ffffff;line-height:17px">Mostly clear</div>
<svg style="left:1048px;top:774px" width="14" height="8" viewBox="0 0 14 8"><path d="M1 7L7 1L13 7" stroke="#fff" stroke-width="1.3" fill="none"/></svg>
<svg style="left:1070px;top:770px" width="20" height="20" viewBox="1070 770 20 20"><path d="M1075 773Q1077 771.8 1079 773M1075 787Q1077 788.2 1079 787" stroke="#fff" stroke-width="1.1" fill="none"/><rect x="1074.2" y="775" width="7.3" height="10" rx="2.5" stroke="#fff" stroke-width="1.2" fill="none"/><path d="M1081.5 778L1085.3 776V784L1081.5 782" stroke="#fff" stroke-width="1.2" fill="none"/></svg>
<svg style="left:1094px;top:771px" width="18" height="18" viewBox="0 0 18 18"><rect x="1" y="2" width="15" height="12" stroke="#fff" stroke-width="1.2" fill="none"/><path d="M5 10L9 5M9 9H12" stroke="#fff" stroke-width="1.2"/><circle cx="14" cy="14.5" r="3.2" fill="#f7a21b"/></svg>
<svg style="left:1118px;top:772px" width="18" height="16" viewBox="0 0 18 16"><rect x="1" y="4" width="14" height="8" stroke="#fff" stroke-width="1.2" fill="none"/><rect x="2" y="1" width="5" height="4" stroke="#fff" stroke-width="1.1" fill="none"/><path d="M8 12V15M4 15H12" stroke="#fff" stroke-width="1.2"/></svg>
<svg style="left:1143px;top:772px" width="18" height="16" viewBox="0 0 18 16"><path d="M1 5H4L8 1.5V14.5L4 11H1Z" stroke="#fff" stroke-width="1.2" fill="none"/><path d="M11 5Q12.5 8 11 11M13.5 3Q16 8 13.5 13" stroke="#fff" stroke-width="1.2" fill="none"/></svg>
<div class="t" style="left:1164px;top:764px;width:64px;text-align:center;font-size:12px;color:#ffffff;line-height:15px">7:52 PM</div>
<div class="t" style="left:1164px;top:782px;width:64px;text-align:center;font-size:12px;color:#ffffff;line-height:15px">1/22/2025</div>
<svg style="left:1230px;top:765px" width="50" height="30" viewBox="1230 765 50 30"><path d="M1239.5 772.5H1255.5V784H1250.5L1247.5 787.3L1244.5 784H1239.5Z" stroke="#fff" stroke-width="1.2" fill="none" stroke-linejoin="miter"/><path d="M1275.5 760V800" stroke="#5a6a74" stroke-width="1"/></svg>
</body></html>
